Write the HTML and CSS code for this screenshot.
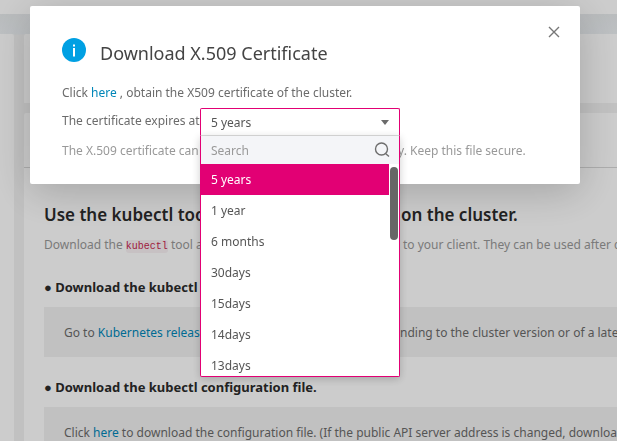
FILE: index.html
```html
<!DOCTYPE html>
<html lang="en">
<head>
<meta charset="utf-8">
<meta name="viewport" content="width=device-width, initial-scale=1">
<title>Download X.509 Certificate</title>
<link rel="stylesheet" href="styles.css">
</head>
<body>
<div class="page">
  <header class="topbar"></header>
  <div class="columns">
    <aside class="sidebar"></aside>
    <main class="content">
      <section class="card summary"></section>
      <section class="card guide">
        <div class="tabs"></div>
        <div class="guide-body">
          <h2><span class="lead">Use the kubectl tool to run operations</span>on the cluster.</h2>
          <p class="intro"><span class="lead">Download the <code>kubectl</code> tool and the configuration file</span>to your client. They can be used after configuration.</p>
          <h3>● Download the kubectl tool.</h3>
          <div class="step"><span class="lead">Go to <a href="#">Kubernetes release page</a> to get kubectl correspo</span>nding to the cluster version or of a later version.</div>
          <h3>● Download the kubectl configuration file.</h3>
          <div class="step">Click <a href="#">here</a> to download the configuration file. (If the public API server address is changed, download the file again.)</div>
        </div>
      </section>
    </main>
  </div>
</div>
<div class="overlay">
  <div class="dialog" role="dialog" aria-labelledby="dialog-title">
    <button class="close" type="button" aria-label="Close">
      <svg width="12" height="12" viewBox="0 0 12 12"><path d="M1 1 11 11M11 1 1 11" fill="none" stroke="currentColor" stroke-width="1.4"/></svg>
    </button>
    <div class="dialog-head">
      <svg class="info" width="24" height="24" viewBox="0 0 24 24" aria-hidden="true"><circle cx="12" cy="12" r="12" fill="#00a0e3"/><path d="M11 6.500h2v2h-2zM11 10h2v8.500h-2z" fill="#fff"/></svg>
      <h1 id="dialog-title">Download X.509 Certificate</h1>
    </div>
    <p>Click <a href="#">here</a> , obtain the X509 certificate of the cluster.</p>
    <div class="field">
      <label for="expiry">The certificate expires at</label>
      <div class="picker">
        <select id="expiry"><option>5 years</option><option>1 year</option><option>6 months</option><option>30days</option><option>15days</option><option>14days</option><option>13days</option></select>
        <svg class="caret" width="8" height="5" viewBox="0 0 8 5" aria-hidden="true"><path d="M0 0h8L4 5z" fill="#6b6b6b"/></svg>
        <div class="menu">
          <div class="search">
            <input type="text" placeholder="Search" aria-label="Search">
            <svg width="16" height="16" viewBox="0 0 16 16" aria-hidden="true"><g fill="none" stroke="#6e6e6e" stroke-width="1.400"><circle cx="7.500" cy="7" r="6"/><path d="m11.500 11.500 3.500 3"/></g></svg>
          </div>
          <ul class="options" role="listbox" aria-label="Validity period">
            <li class="selected" role="option" aria-selected="true">5 years</li>
            <li role="option">1 year</li>
            <li role="option">6 months</li>
            <li role="option">30days</li>
            <li role="option">15days</li>
            <li role="option">14days</li>
            <li role="option">13days</li>
          </ul>
          <div class="thumb"></div>
        </div>
      </div>
    </div>
    <p class="note"><span class="lead">The X.509 certificate can be downloaded onl</span>y. Keep this file secure.</p>
  </div>
</div>
</body>
</html>
```
FILE: styles.css
```css
* { box-sizing: border-box; }
body {
  margin: 0;
  height: 100vh;
  overflow: hidden;
  font: 12px/20px "Noto Sans", "Open Sans", sans-serif;
  color: #6b6b6b;
  background: #f2f2f2;
}
h1, h2, h3, p, ul { margin: 0; padding: 0; }
a { color: #0086b8; text-decoration: none; }
.lead { display: inline-block; vertical-align: top; white-space: nowrap; }
.page { height: 100vh; display: flex; flex-direction: column; overflow: hidden; }
.topbar { flex: none; height: 14px; background: #fff; }
.columns {
  flex: 1;
  min-height: 0;
  display: flex;
  gap: 10px;
  padding-top: 20px;
  background: linear-gradient(#e8ebed, #ecf0f3 20px, #f2f2f2 21px);
}
.sidebar { width: 14px; background: #fff; border-radius: 0 2px 0 0; }
.content { flex: 1; min-width: 0; display: flex; flex-direction: column; gap: 10px; }
.card { background: #fff; border-radius: 2px 0 0 0; }
.summary { flex: none; height: 69px; }
.guide { flex: none; }
.tabs { height: 55px; border-bottom: 1px solid #d8d8d8; }
.guide-body { padding: 34px 0 0 20px; white-space: nowrap; }
h2 { font-size: 17px; line-height: 26px; font-weight: 600; color: #2b2b2b; }
h2 .lead { width: 357px; }
.intro { margin-top: 7px; color: #999; }
.intro .lead { width: 359px; }
code {
  padding: 1px 0;
  border-radius: 3px;
  font: 10px "Liberation Mono", monospace;
  color: #c7254e;
  background: #f9f2f4;
}
h3 { margin-top: 21px; font-size: 13px; line-height: 22px; font-weight: 700; color: #2b2b2b; }
.step { margin-top: 9px; padding: 16px 20px 14px; background: #f2f2f2; }
.step .lead { width: 336px; }
.step + h3 { margin-top: 19px; }
.overlay { position: fixed; inset: 0; padding: 6px 37px 0 30px; background: rgba(0, 0, 0, .2); }
.dialog {
  position: relative;
  padding: 32px 32px 23px;
  border-radius: 2px;
  background: #fff;
  box-shadow: 0 8px 40px rgba(0, 0, 0, .2);
}
.close {
  position: absolute;
  top: 20px;
  right: 20px;
  display: flex;
  padding: 0;
  border: 0;
  background: none;
  color: #777;
}
.dialog-head { display: flex; gap: 14px; align-items: flex-start; margin-bottom: 16px; }
h1 { margin-top: 1px; font-size: 18px; line-height: 28px; font-weight: 400; color: #444; }
.field { display: flex; gap: 4px; margin-top: 5px; height: 28px; }
.field label { line-height: 26px; width: 134px; white-space: nowrap; }
.picker { position: relative; width: 200px; }
.picker select {
  appearance: none;
  display: block;
  width: 100%;
  height: 28px;
  padding: 2px 10px 0;
  border: 1px solid #e20074;
  border-bottom-color: #ddd;
  border-radius: 2px 2px 0 0;
  outline: 0;
  font: inherit;
  color: #555;
  background: #fff;
}
.caret { position: absolute; top: 12px; right: 11px; }
.menu {
  position: absolute;
  z-index: 1;
  top: 28px;
  left: 0;
  width: 100%;
  border: 1px solid #e20074;
  border-top: 0;
  border-radius: 0 0 2px 2px;
  background: #fff;
  box-shadow: 0 2px 8px rgba(0, 0, 0, .2);
}
.search { display: flex; align-items: center; height: 28px; padding: 0 9px 0 10px; background: #f4f5f8; }
.search input { flex: 1; min-width: 0; padding: 2px 0 0; border: 0; outline: 0; font: inherit; background: none; }
.search input::placeholder { color: #999; }
.options { height: 212px; overflow: hidden; list-style: none; color: #555; }
.options li { height: 31px; padding: 0 10px; line-height: 31px; }
.options .selected { margin-right: 10px; color: #fff; background: #e20074; }
.thumb { position: absolute; top: 31px; right: 1px; width: 8px; height: 73px; border-radius: 4px; background: #666; }
.note { margin-top: 5px; color: #999; white-space: nowrap; }
.note .lead { width: 336px; }
```
